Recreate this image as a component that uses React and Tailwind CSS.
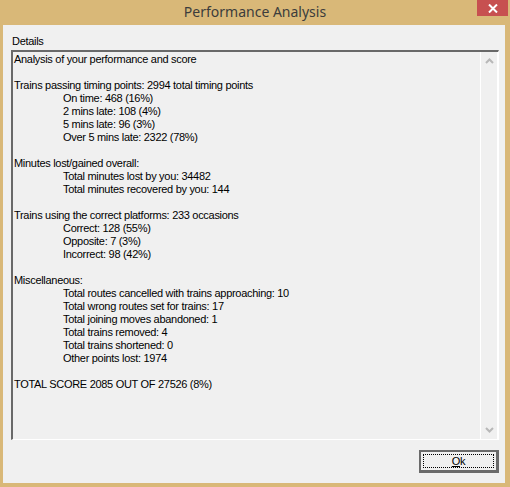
import React from "react";

const lines = [
  [0, "Analysis of your performance and score"],
  [0, ""],
  [0, "Trains passing timing points: 2994 total timing points"],
  [1, "On time: 468 (16%)"],
  [1, "2 mins late: 108 (4%)"],
  [1, "5 mins late: 96 (3%)"],
  [1, "Over 5 mins late: 2322 (78%)"],
  [0, ""],
  [0, "Minutes lost/gained overall:"],
  [1, "Total minutes lost by you: 34482"],
  [1, "Total minutes recovered by you: 144"],
  [0, ""],
  [0, "Trains using the correct platforms: 233 occasions"],
  [1, "Correct: 128 (55%)"],
  [1, "Opposite: 7 (3%)"],
  [1, "Incorrect: 98 (42%)"],
  [0, ""],
  [0, "Miscellaneous:"],
  [1, "Total routes cancelled with trains approaching: 10"],
  [1, "Total wrong routes set for trains: 17"],
  [1, "Total joining moves abandoned: 1"],
  [1, "Total trains removed: 4"],
  [1, "Total trains shortened: 0"],
  [1, "Other points lost: 1974"],
  [0, ""],
  [0, "TOTAL SCORE 2085 OUT OF 27526 (8%)"],
];

export default function App() {
  return (
    <div
      className="w-[510px] h-[487px] bg-[#d9b878] flex flex-col overflow-hidden"
      style={{ fontFamily: '"Liberation Sans", Arial, sans-serif' }}
    >
      {/* title bar */}
      <div className="relative h-[25px] shrink-0 flex items-center justify-center">
        <span
          className="text-[14px] text-[#3c3c3c] leading-none pb-[2px]"
          style={{ fontFamily: '"Noto Sans", "Open Sans", sans-serif' }}
        >
          Performance Analysis
        </span>
        <div className="absolute right-[2px] top-0 w-[31px] h-[16px] bg-[#c75050] flex items-center justify-center">
          <svg width="10" height="9" viewBox="0 0 10 9">
            <path d="M1 0.5 L9 8.5 M9 0.5 L1 8.5" stroke="#fff" strokeWidth="2" />
          </svg>
        </div>
      </div>

      {/* client */}
      <div className="ml-[3px] mr-[5px] h-[458px] bg-[#f0f0f0] flex flex-col text-[11px] tracking-[-0.3px] text-black">
        <div className="pl-[9px] pt-[10px] h-[25px] leading-[13px]">Details</div>
        <div className="ml-[8px] w-[488px] h-[390px] flex border-t-2 border-l-2 border-t-[#696969] border-l-[#696969] border-b border-r border-b-white border-r-white">
          <div className="flex-1 pl-[1px] pt-[1px]">
            {lines.map(([ind, t], i) => (
              <div
                key={i}
                className={`h-[13px] leading-[13px] whitespace-pre ${ind ? "pl-[49px]" : ""}`}
              >
                {t}
              </div>
            ))}
          </div>
          <div className="w-[18px] border-l border-r border-l-white border-r-white flex flex-col justify-between items-center py-[6px]">
            <svg width="9" height="6" viewBox="0 0 9 6">
              <path d="M1 5 L4.5 1.5 L8 5" stroke="#b8b8b8" strokeWidth="2" fill="none" />
            </svg>
            <svg width="9" height="6" viewBox="0 0 9 6">
              <path d="M1 1 L4.5 4.5 L8 1" stroke="#b8b8b8" strokeWidth="2" fill="none" />
            </svg>
          </div>
        </div>
        <div className="flex justify-end pr-[6px] pt-[10px]">
          <div className="w-[80px] h-[23px] border-2 border-[#6a6a6a] border-b-[3px] border-r-[3px] bg-[#f0f0f0] p-[2px]">
            <div className="w-full h-full border border-dotted border-black flex items-center justify-center leading-none">
              <span><span className="underline">O</span>k</span>
            </div>
          </div>
        </div>
      </div>
    </div>
  );
}
